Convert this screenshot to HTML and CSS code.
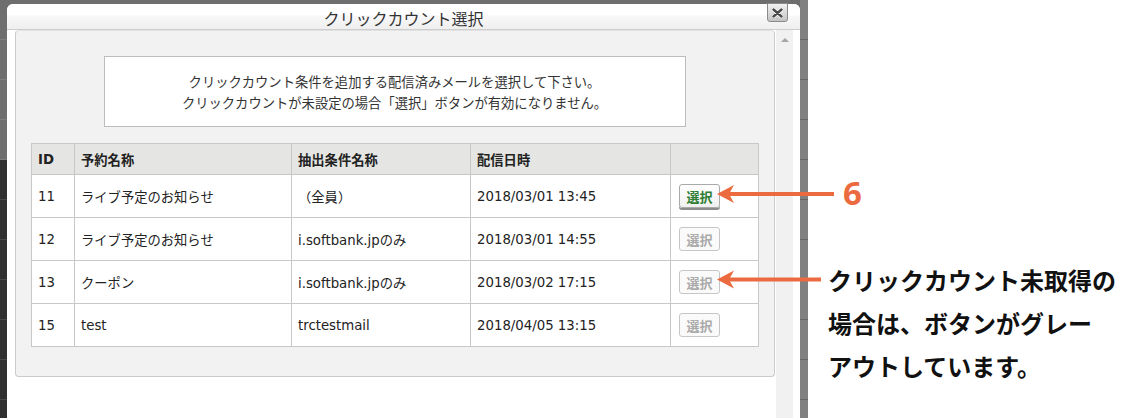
FILE: index.html
```html
<!DOCTYPE html>
<html lang="ja">
<head>
  <meta charset="UTF-8" />
  <title>クリックカウント選択</title>
  <link rel="stylesheet" href="styles.css">
</head>
<body>
  <div class="page">
    <div class="backdrop">
      <div class="strip-left"></div>
      <div class="dialog-col">
        <div class="dialog">
          <div class="titlebar">
            <span class="title">クリックカウント選択</span>
            <button class="close" title="close">
              <svg width="11" height="10" viewBox="0 0 11 10">
                <path d="M1.5 1.5 L9.5 8.5 M9.5 1.5 L1.5 8.5" stroke="#fff" stroke-width="4" stroke-linecap="round"/>
                <path d="M1.5 1.5 L9.5 8.5 M9.5 1.5 L1.5 8.5" stroke="#4a4a4a" stroke-width="2.4" stroke-linecap="round"/>
              </svg>
            </button>
          </div>
          <div class="dialog-body">
            <div class="pane">
              <div class="panel">
                <div class="notice">
                  クリックカウント条件を追加する配信済みメールを選択して下さい。<br>
                  クリックカウントが未設定の場合「選択」ボタンが有効になりません。
                </div>
                <table class="mails">
                  <colgroup>
                    <col class="c-id"><col class="c-name"><col class="c-cond"><col class="c-date"><col class="c-btn">
                  </colgroup>
                  <thead>
                    <tr><th>ID</th><th>予約名称</th><th>抽出条件名称</th><th>配信日時</th><th></th></tr>
                  </thead>
                  <tbody>
                    <tr><td>11</td><td>ライブ予定のお知らせ</td><td>（全員）</td><td>2018/03/01 13:45</td><td><button class="pick">選択</button></td></tr>
                    <tr><td>12</td><td>ライブ予定のお知らせ</td><td>i.softbank.jpのみ</td><td>2018/03/01 14:55</td><td><button class="pick" disabled>選択</button></td></tr>
                    <tr><td>13</td><td>クーポン</td><td>i.softbank.jpのみ</td><td>2018/03/02 17:15</td><td><button class="pick" disabled>選択</button></td></tr>
                    <tr><td>15</td><td>test</td><td>trctestmail</td><td>2018/04/05 13:15</td><td><button class="pick" disabled>選択</button></td></tr>
                  </tbody>
                </table>
              </div>
            </div>
            <div class="scrollbar"><span class="scroll-up"></span></div>
          </div>
        </div>
      </div>
      <div class="strip-right"></div>
    </div>

    <div class="notes">
      <div class="step">6</div>
      <p class="note">クリックカウント未取得の<br>場合は、ボタンがグレー<br>アウトしています。</p>
    </div>

    <svg class="arrows" width="1134" height="418" viewBox="0 0 1134 418">
      <g fill="#ec6a3f">
        <rect x="728" y="192" width="106" height="4"/>
        <path d="M717 194 L734 185 L729 194 L734 203 Z"/>
        <rect x="728" y="277.5" width="93" height="4"/>
        <path d="M717 279.5 L734 270.5 L729 279.5 L734 288.5 Z"/>
      </g>
    </svg>
  </div>
</body>
</html>
```

FILE: styles.css
```css
* {
  margin: 0;
  padding: 0;
  box-sizing: border-box;
}

body {
  background: #fff;
  font-family: "DejaVu Sans", "Noto Sans CJK JP", sans-serif;
  color: #222;
}

.page {
  position: relative;
  width: 1134px;
  height: 418px;
  overflow: hidden;
  display: flex;
}

.backdrop {
  display: flex;
  width: 808px;
  height: 418px;
}

.strip-left {
  width: 7px;
  background:
    repeating-linear-gradient(transparent 0 39px, rgba(255, 255, 255, 0.12) 39px 40px),
    linear-gradient(#6e6e6e 0 160px, #303030 160px);
}

.strip-right {
  width: 8px;
  background: repeating-linear-gradient(#808080 0 39px, #666 39px 40px);
}

.dialog-col {
  width: 793px;
  padding-top: 4px;
  background: #6e6e6e;
}

.dialog {
  position: relative;
  height: 414px;
  background: #fff;
  border-radius: 6px 6px 0 0;
}

.titlebar {
  height: 26px;
  border-bottom: 1px solid #cdcdcd;
  border-radius: 6px 6px 0 0;
  background: linear-gradient(#fff 0 11px, #f8f8f8 12px, #efefef 100%);
  text-align: center;
  padding-top: 3px;
}

.title {
  font-family: "Noto Sans CJK JP", sans-serif;
  font-size: 16px;
  line-height: 22px;
  color: #333;
}

.close {
  position: absolute;
  left: 760px;
  top: -1px;
  width: 21px;
  height: 19px;
  border: 1px solid #8a8a8a;
  border-radius: 0 0 3px 3px;
  background: linear-gradient(#f2f2f2, #c4c4c4);
  display: flex;
  align-items: center;
  justify-content: center;
}

.dialog-body {
  display: flex;
  height: 388px;
}

.pane {
  padding-left: 8px;
  width: 768px;
}

.panel {
  width: 760px;
  height: 347px;
  background: #f2f2f2;
  border: 1px solid #cacaca;
  border-top-color: #e2e2e2;
  border-radius: 4px;
  padding: 25px 16px 0 15px;
}

.scrollbar {
  width: 17px;
  margin-left: 1px;
  background: #f1f1f1;
}

.scroll-up {
  display: block;
  width: 0;
  height: 0;
  margin: 8px auto 0;
  border-left: 4px solid transparent;
  border-right: 4px solid transparent;
  border-bottom: 4px solid #a5a5a5;
}

.notice {
  width: 582px;
  margin: 0 auto;
  background: #fff;
  border: 1px solid #bdbdbd;
  padding: 14px 0 13px;
  text-align: center;
  font-family: "Noto Sans CJK JP", sans-serif;
  font-size: 13.3px;
  line-height: 21px;
  color: #333;
}

.mails {
  margin-top: 16px;
  width: 727px;
  table-layout: fixed;
  border-collapse: collapse;
  background: #fff;
  font-size: 13.3px;
}

.c-id { width: 43px; }
.c-name { width: 217px; }
.c-cond { width: 179px; }
.c-date { width: 200px; }
.c-btn { width: 88px; }

.mails th,
.mails td {
  border: 1px solid #c8c8c8;
  padding: 0 6px;
  text-align: left;
  vertical-align: middle;
  white-space: nowrap;
}

.mails th {
  height: 31px;
  background: #e5e6e3;
  font-weight: bold;
  color: #222;
}

.mails td {
  height: 43px;
}

.pick {
  margin-left: 2px;
  width: 41px;
  height: 24px;
  border: 1px solid #a9a9a9;
  border-radius: 3px;
  background: linear-gradient(#fff, #f0f0f0);
  font-family: "Noto Sans CJK JP", sans-serif;
  font-size: 13px;
  font-weight: bold;
  color: #2e7d32;
  box-shadow: 0 2px 0 #8c8c8c;
  vertical-align: middle;
}

.pick:disabled {
  color: #aaa;
  border-color: #c6c6c6;
  box-shadow: none;
  background: #fafafa;
}

.notes {
  width: 326px;
  padding-top: 176px;
}

.step {
  margin-left: 35px;
  font-family: "Noto Sans", sans-serif;
  font-size: 33px;
  line-height: 33px;
  font-weight: bold;
  color: #ec6a3f;
}

.note {
  margin: 49px 0 0 20px;
  font-family: "Noto Sans CJK JP", sans-serif;
  font-size: 24px;
  line-height: 43px;
  font-weight: bold;
  color: #111;
  white-space: nowrap;
}

.arrows {
  position: absolute;
  left: 0;
  top: 0;
  pointer-events: none;
}
```
